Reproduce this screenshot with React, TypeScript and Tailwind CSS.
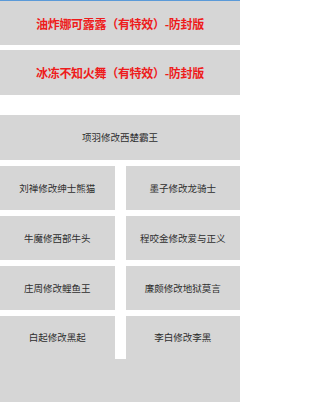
const font = { fontFamily: '"Noto Sans CJK SC", "Liberation Sans", sans-serif' };

const skins: [string, string][] = [
    ['刘禅修改绅士熊猫', '墨子修改龙骑士'],
    ['牛魔修西部牛头', '程咬金修改爱与正义'],
    ['庄周修改鲤鱼王', '廉颇修改地狱莫言'],
    ['白起修改黑起', '李白修改李黑'],
];

export default function App() {
    return (
        <div className="w-full max-w-[240px] h-[402px] bg-white flex flex-col overflow-hidden" style={font}>
            {/* top bar edge */}
            <div className="h-[2px] bg-[#d6d6d6] border-t border-[#5b9ad8]" />

            <div className="h-[43px] bg-[#d6d6d6] flex items-center justify-center text-[12px] font-bold text-[#ee1c1c] tracking-[-0.3px]">
                油炸娜可露露（有特效）-防封版
            </div>
            <div className="h-[45px] mt-[5px] bg-[#d6d6d6] flex items-center justify-center text-[12px] font-bold text-[#ee1c1c] tracking-[-0.3px]">
                冰冻不知火舞（有特效）-防封版
            </div>

            <div className="h-[45px] mt-[20px] bg-[#d6d6d6] flex items-center justify-center text-[9.5px] text-[#2e2e2e]">
                项羽修改西楚霸王
            </div>

            <div className="mt-[6px] grid grid-cols-2 gap-x-[11px] gap-y-[6px]">
                {skins.map(([a, b], i) => (
                    <div key={i} className="contents">
                        <div className={`${i === 3 ? 'h-[43px]' : 'h-[44px]'} bg-[#d6d6d6] flex items-center justify-center text-[9.5px] text-[#2e2e2e]`}>{a}</div>
                        <div className={`${i === 3 ? 'h-[43px]' : 'h-[44px]'} bg-[#d6d6d6] flex items-center justify-center text-[9.5px] text-[#2e2e2e]`}>{b}</div>
                    </div>
                ))}
            </div>

            <div className="flex-1 bg-[#d6d6d6]" />
        </div>
    );
}
